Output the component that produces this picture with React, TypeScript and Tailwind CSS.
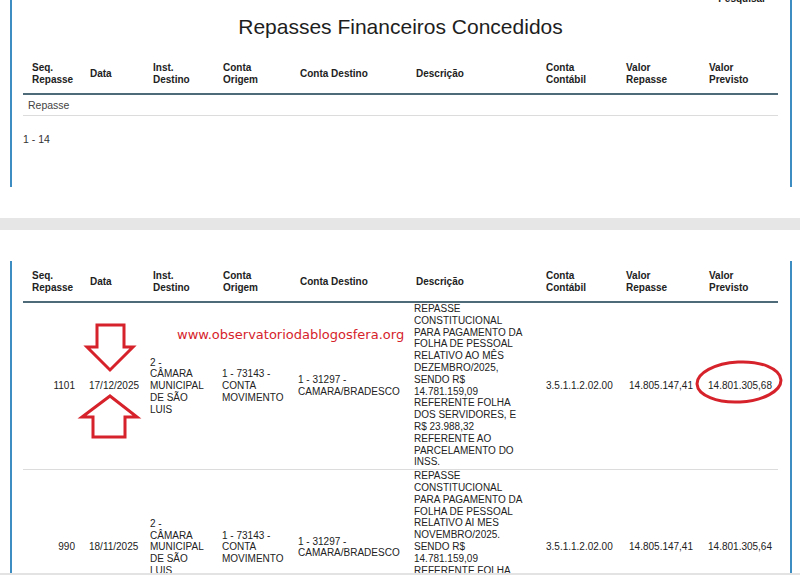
import React from 'react'

type Repasse = {
  seq: string
  data: string
  inst: string[]
  origem: string[]
  destino: string[]
  descricao: string[]
  contabil: string
  valor: string
  previsto: string
}

const repasses: Repasse[] = [
  {
    seq: '1101',
    data: '17/12/2025',
    inst: ['2 -', 'CÂMARA', 'MUNICIPAL', 'DE SÃO', 'LUIS'],
    origem: ['1 - 73143 -', 'CONTA', 'MOVIMENTO'],
    destino: ['1 - 31297 -', 'CAMARA/BRADESCO'],
    descricao: [
      'REPASSE',
      'CONSTITUCIONAL',
      'PARA PAGAMENTO DA',
      'FOLHA DE PESSOAL',
      'RELATIVO AO MÊS',
      'DEZEMBRO/2025,',
      'SENDO R$',
      '14.781.159,09',
      'REFERENTE FOLHA',
      'DOS SERVIDORES, E',
      'R$ 23.988,32',
      'REFERENTE AO',
      'PARCELAMENTO DO',
      'INSS.',
    ],
    contabil: '3.5.1.1.2.02.00',
    valor: '14.805.147,41',
    previsto: '14.801.305,68',
  },
  {
    seq: '990',
    data: '18/11/2025',
    inst: ['2 -', 'CÂMARA', 'MUNICIPAL', 'DE SÃO', 'LUIS'],
    origem: ['1 - 73143 -', 'CONTA', 'MOVIMENTO'],
    destino: ['1 - 31297 -', 'CAMARA/BRADESCO'],
    descricao: [
      'REPASSE',
      'CONSTITUCIONAL',
      'PARA PAGAMENTO DA',
      'FOLHA DE PESSOAL',
      'RELATIVO AI MES',
      'NOVEMBRO/2025.',
      'SENDO R$',
      '14.781.159,09',
      'REFERENTE FOLHA',
      'DOS SERVIDORES E',
      'R$ 20.146,55',
      'REFERENTE AO',
      'INSS.',
    ],
    contabil: '3.5.1.1.2.02.00',
    valor: '14.805.147,41',
    previsto: '14.801.305,64',
  },
]

// Column widths taken from the header positions
function Cols() {
  return (
    <colgroup>
      <col className="w-[59px]" />
      <col className="w-[63px]" />
      <col className="w-[70px]" />
      <col className="w-[77px]" />
      <col className="w-[116px]" />
      <col className="w-[130px]" />
      <col className="w-[80px]" />
      <col className="w-[83px]" />
      <col className="w-[77px]" />
    </colgroup>
  )
}

function Header() {
  const th = 'pl-[8px] pt-[9px] pb-[7px] text-left align-middle font-bold'
  return (
    <thead className="text-[10px] leading-[12px] text-[#222]">
      <tr className="border-b-2 border-[#4e6b79]">
        <th className="pl-[9px] pt-[9px] pb-[7px] text-left align-middle font-bold">
          Seq.
          <br />
          Repasse
        </th>
        <th className={th}>Data</th>
        <th className={th}>
          Inst.
          <br />
          Destino
        </th>
        <th className={th}>
          Conta
          <br />
          Origem
        </th>
        <th className={th}>Conta Destino</th>
        <th className={th}>Descrição</th>
        <th className={th}>
          Conta
          <br />
          Contábil
        </th>
        <th className={th}>
          Valor
          <br />
          Repasse
        </th>
        <th className={th}>
          Valor
          <br />
          Previsto
        </th>
      </tr>
    </thead>
  )
}

const Lines = ({ lines }: { lines: string[] }) => (
  <>
    {lines.map((l, i) => (
      <div key={i} className="whitespace-nowrap">
        {l}
      </div>
    ))}
  </>
)

function Row({ r }: { r: Repasse }) {
  return (
    <tr className="border-b border-[#dcdcdc] align-middle text-[10px] leading-[11.8px] text-[#222]">
      <td className="pr-[7px] text-right">{r.seq}</td>
      <td className="pl-[7px]">{r.data}</td>
      <td className="pl-[5px]">
        <Lines lines={r.inst} />
      </td>
      <td className="pl-[7px]">
        <Lines lines={r.origem} />
      </td>
      <td className="pl-[6px]">
        <Lines lines={r.destino} />
      </td>
      <td className="pl-[6px] pb-[1px]">
        <Lines lines={r.descricao} />
      </td>
      <td className="pl-[8px]">{r.contabil}</td>
      <td className="pr-[8px] text-right">{r.valor}</td>
      <td className="pr-[6px] text-right">{r.previsto}</td>
    </tr>
  )
}

export default function App() {
  return (
    <div className="relative h-[575px] w-[800px] overflow-hidden bg-white font-['Liberation_Sans',Arial,sans-serif] text-[#222]">
      {/* top panel */}
      <div className="ml-[10px] flex h-[187px] w-[782px] flex-col border-x-2 border-[#3d8dc2] pl-[11px] pr-[12px]">
        <div className="-mt-[7px] flex h-[12px] justify-end pr-[12px] text-[10px] font-bold leading-[12px]">
          Pesquisar
        </div>
        <h1 className="mt-[9px] text-center text-[21px] leading-[26px] text-[#1e1e1e]">
          Repasses Financeiros Concedidos
        </h1>
        <table className="mt-[13px] w-[755px] table-fixed border-collapse">
          <Cols />
          <Header />
          <tbody>
            <tr className="border-b border-[#dcdcdc]">
              <td colSpan={9} className="py-[4px] pl-[5px] text-[10.5px] leading-[12px] text-[#444]">
                Repasse
              </td>
            </tr>
          </tbody>
        </table>
        <div className="mt-[17px] text-[10.5px] leading-[12px] text-[#333]">1 - 14</div>
      </div>

      {/* gap between the two captures */}
      <div className="mt-[31px] h-[12px] bg-[#e6e6e6]" />
      <div className="h-[31px]" />

      {/* bottom panel */}
      <div className="ml-[10px] h-[312px] w-[782px] overflow-hidden border-x-2 border-[#3d8dc2] pl-[11px] pr-[12px]">
        <table className="w-[755px] table-fixed border-collapse">
          <Cols />
          <Header />
          <tbody>
            {repasses.map(r => (
              <Row key={r.seq} r={r} />
            ))}
          </tbody>
        </table>
      </div>
      <div className="h-[2px] bg-[#e3e3e3]" />

      {/* annotations drawn over the screenshot */}
      <div className="pointer-events-none absolute left-[177px] top-[327px] whitespace-nowrap font-['DejaVu_Sans',Verdana,sans-serif] text-[13px] leading-[16px] text-[#d6232b]">
        www.observatoriodablogosfera.org
      </div>
      <svg
        className="pointer-events-none absolute left-0 top-0"
        width={800}
        height={575}
        viewBox="0 0 800 575"
        fill="none"
        stroke="#d6232b"
        strokeWidth={3}
        strokeLinejoin="miter"
      >
        <path d="M97 325 H124 V347 H133 L110 370 L87 347 H97 Z" />
        <path d="M110 396 L137 417 H125 V437 H93 V417 H82 Z" />
        <ellipse cx={739} cy={382} rx={42} ry={20} transform="rotate(-3 739 382)" />
      </svg>
    </div>
  )
}
